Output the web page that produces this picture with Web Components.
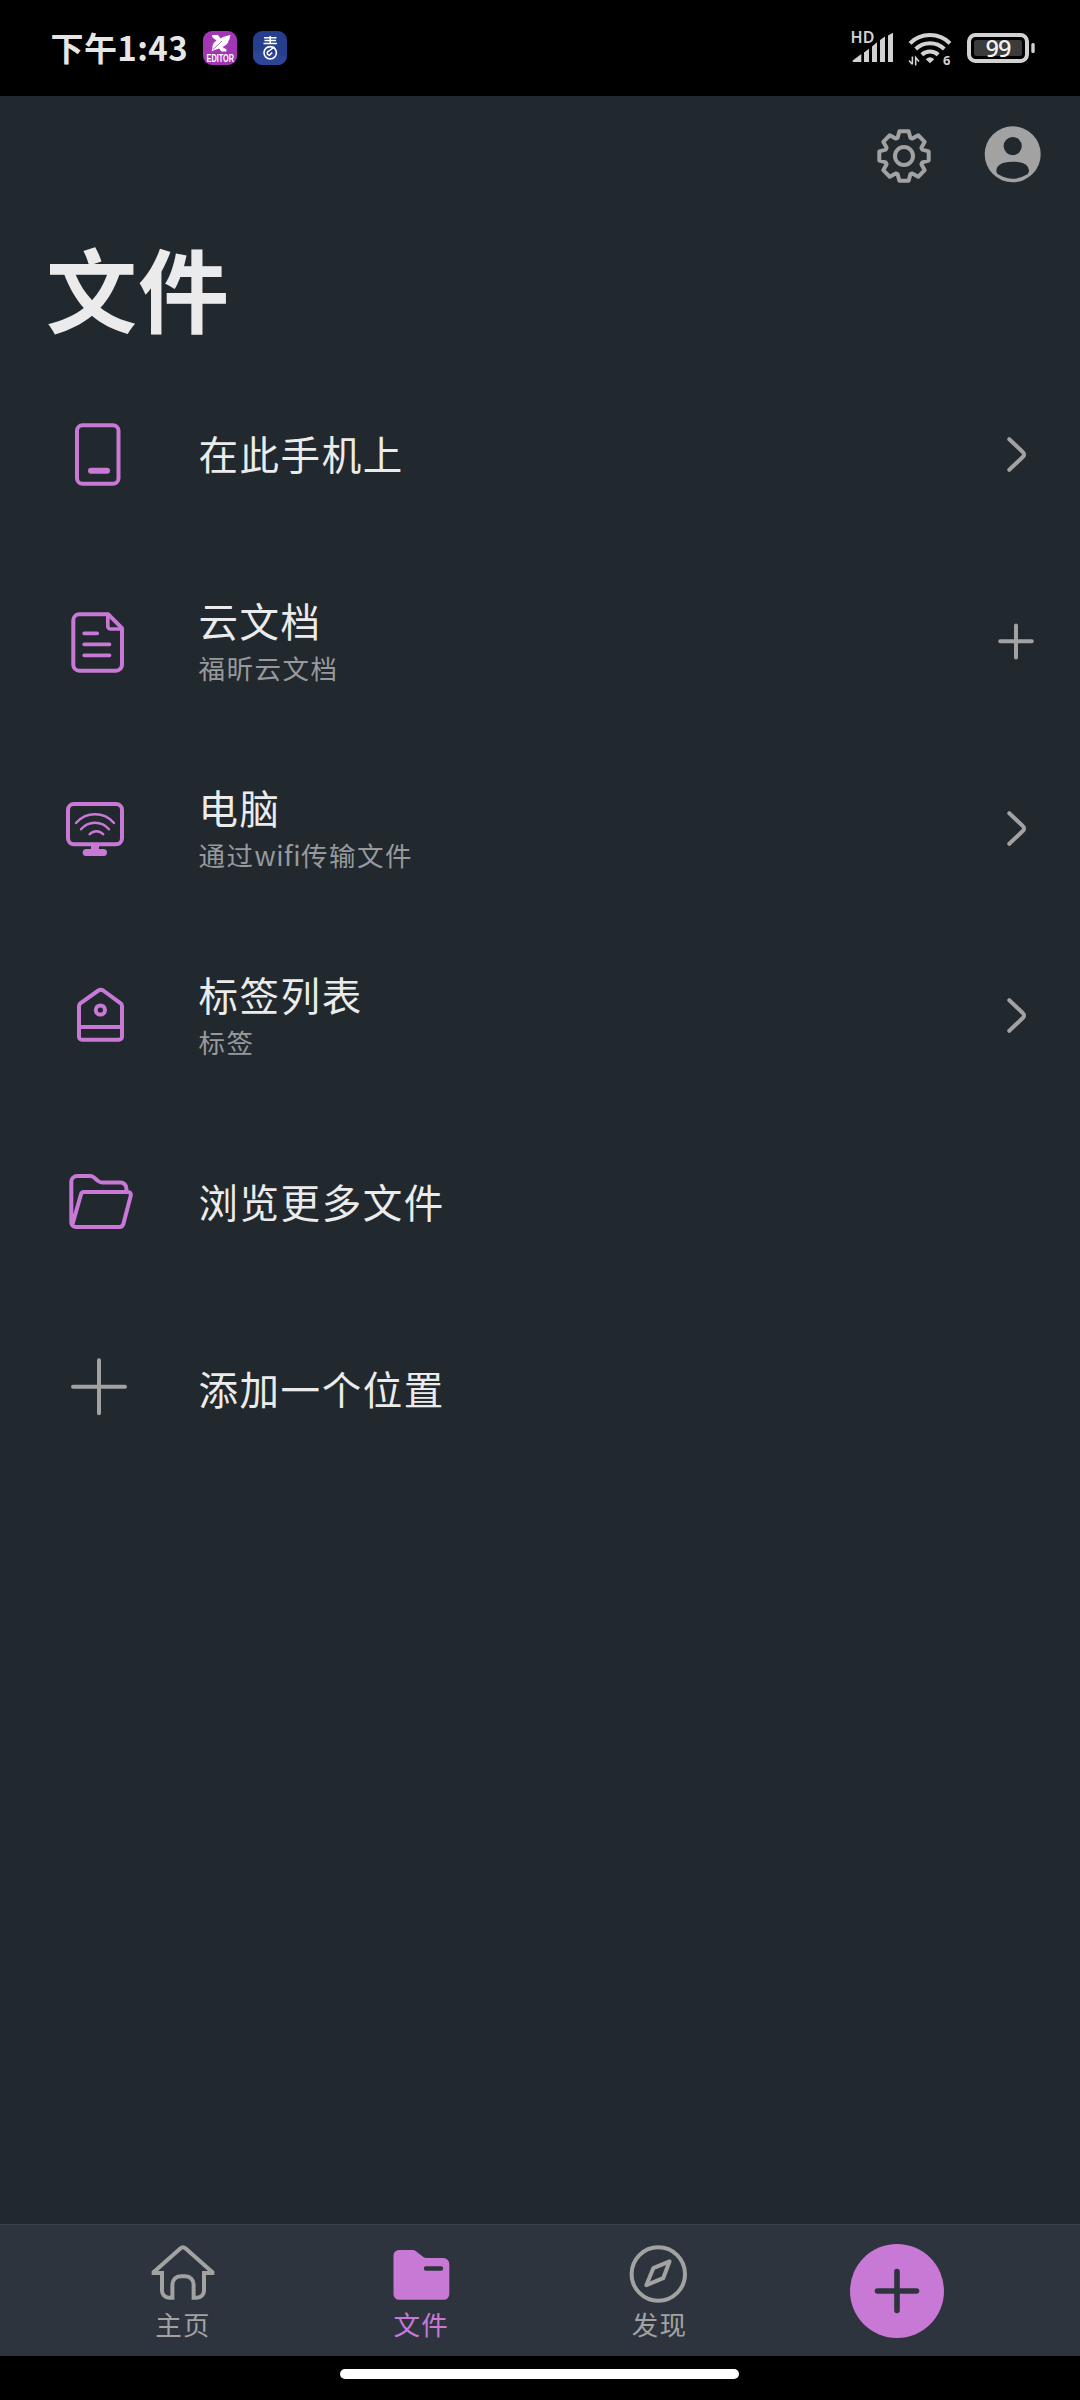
<!DOCTYPE html>
<html lang="zh-CN">
<head>
<meta charset="utf-8">
<title>文件</title>
<style>
html,body{margin:0;padding:0;background:#21282e}
body{width:1080px;height:2400px;overflow:hidden;font-family:"Noto Sans CJK SC","Noto Sans",sans-serif}
</style>
</head>
<body>
<files-screen></files-screen>
<script>
const ICONS = {
  phone: '<rect x="17" y="11.3" width="41.5" height="58.4" rx="5.5"/><path d="M31 56.8H47" stroke-width="6"/>',
  doc: '<path d="M48.3 13.3H19.3a6 6 0 0 0-6 6V63.7a6 6 0 0 0 6 6H56a6 6 0 0 0 6-6V27.2Z"/><path d="M47.8 14V25.2a2.8 2.8 0 0 0 2.8 2.8H61" stroke-width="3.6"/><path d="M24.2 32.3H37.2M24.2 43.3H49.5M24.2 54.3H49.5" stroke-width="3.8"/>',
  monitor: '<rect x="8" y="16" width="54" height="40.3" rx="6"/><path d="M16 35A25 25 0 0 1 54 35M21 41.3A18.3 18.3 0 0 1 49 41.3M29.6 46.3A9 9 0 0 1 43.2 46.3" stroke-width="2.4"/><path d="M35 58V63" stroke-width="8" stroke-linecap="butt"/><path d="M26.2 64.5H43.5" stroke-width="7"/>',
  tag: '<path d="M19 31V61.8a3 3 0 0 0 3 3H59a3 3 0 0 0 3-3V31a4 4 0 0 0-2-3.2L43.2 15.5a4.4 4.4 0 0 0-4.8 0L21 27.8a4 4 0 0 0-2 3.2ZM19 52H62"/><circle cx="40.4" cy="35" r="4.6"/>',
  folder: '<path d="M66.4 29V26.5a6 6 0 0 0-6-6H42a6 6 0 0 1-4-1.6L34 15.4a6 6 0 0 0-4-1.4H17.3a6 6 0 0 0-6 6V60.5a4.5 4.5 0 0 0 4.5 4.5H59.5a4 4 0 0 0 3.8-2.8L70.8 33.5a2.8 2.8 0 0 0-2.7-3.5H24a3 3 0 0 0-3 2.2L12.6 62"/>',
  add: '<path d="M39 11.3V64.2M13 37.7H65"/>',
  chevron: '<path d="M13.3 5.2L27 18.2a3 3 0 0 1 0 4.6L13.3 35.8"/>',
  plus: '<path d="M20 4.6V36.4M4.2 20.3H35.8"/>',
  home: '<path d="M10.6 35V34.2L37.6 10.3a3.6 3.6 0 0 1 4.8 0L69.4 34.2V35H61V52.7a7 7 0 0 1-7 7H50.6V46.3a8 8 0 0 0-8-8H37.4a8 8 0 0 0-8 8V59.7H26a7 7 0 0 1-7-7V35Z" stroke-linejoin="miter" stroke-linecap="butt"/>',
  files: '<path fill="currentColor" stroke="none" fill-rule="evenodd" d="M18 12H31.5a6 6 0 0 1 3.8 1.4L42 18.7a6 6 0 0 0 3.6 1.3H62.3a6 6 0 0 1 6 6V56.3a5.5 5.5 0 0 1-5.5 5.5H18a5.5 5.5 0 0 1-5.5-5.5V17.5a5.5 5.5 0 0 1 5.5-5.5ZM45 28.3a2.2 2.2 0 0 0 0 4.4H60a2.2 2.2 0 0 0 0-4.4Z"/>',
  compass: '<circle cx="39.3" cy="36" r="26.7"/><path d="M50.6 23.3L34.3 30.2L27.3 47.2L44.2 40.2Z"/>'
};
function icon(name, w, h){
  return `<svg width="${w}" height="${h}" viewBox="0 0 ${w} ${h}" fill="none" stroke="currentColor" stroke-width="4" stroke-linecap="round" stroke-linejoin="round">${ICONS[name]}</svg>`;
}
function gearPath(){
  const tooth = [[-6.4,-18.2],[-4.6,-24.7],[4.6,-24.7],[6.4,-18.2]], out = [];
  for (let i = 0; i < 8; i++){
    const a = i*Math.PI/4, c = Math.cos(a), s = Math.sin(a);
    for (const [x,y] of tooth) out.push((x*c-y*s).toFixed(2)+' '+(x*s+y*c).toFixed(2));
  }
  return 'M'+out.join('L')+'Z';
}
class Base extends HTMLElement{
  connectedCallback(){
    if (this.shadowRoot) return;
    this.attachShadow({mode:'open'}).innerHTML = '<style>svg{display:block;flex:none;overflow:visible}'+this.css()+'</style>'+this.html();
  }
}
customElements.define('status-bar', class extends Base{
  css(){return `:host{display:grid;grid-template-columns:152.5px auto 1fr;height:96px;background:#000;color:#e6e6e6;box-sizing:border-box;padding:0 44px 0 50.5px;align-items:start}
  .time{font-size:33px;font-weight:700;letter-spacing:.4px;line-height:50px;padding-top:22px;white-space:nowrap;justify-self:start}
  .apps{display:flex;gap:16px;margin-top:31px}
  .sys{justify-self:end;margin-top:28px}`}
  html(){return `<div class="time">下午1:43</div>
  <div class="apps">
  <svg width="34" height="34" viewBox="0 0 34 34"><rect width="34" height="34" rx="9" fill="#a236b4"/>
   <path fill="#fff" d="M9 4H15L17.5 7.5C20 5.5 23 5 27.5 4L26.5 7L27 7.5L25 10.5L25.5 11L23 14L19.5 16L23.5 18.5V20.5H18.5L16 17.5L10.5 19.5L8.5 20.5L9.5 17.5C9 14 11 11 13.5 9.5L9.5 6.5Z"/><path stroke="#a236b4" stroke-width=".8" d="M10 18.5L19 10"/>
   <text x="3.5" y="31" textLength="27.5" lengthAdjust="spacingAndGlyphs" font-family="Liberation Sans" font-weight="700" font-size="10.8" fill="#fff">EDITOR</text></svg>
  <svg width="34" height="34" viewBox="0 0 34 34"><rect width="34" height="34" rx="9" fill="#263f8c"/><path d="M0 20H14L34 26V25A9 9 0 0 1 25 34H9A9 9 0 0 1 0 25Z" fill="#2c4594"/>
   <g fill="none" stroke="#fff"><path stroke-width="1.5" d="M11 6.7H23.5M11.5 9.5H23M10.5 12.5H24M17.2 5V12.5"/><circle cx="17.2" cy="21.8" r="6.2" stroke-width="1.6"/><path stroke-width="1.5" d="M21.5 15.8L15.8 20A2.2 2.2 0 0 0 16.5 24.3L19.2 21.5"/></g></svg>
  </div>
  <svg class="sys" width="186" height="42" viewBox="850 28 186 42" fill="#d2d2d2" font-family="Noto Sans">
   <text x="850.6" y="42.9" font-size="15.3" font-weight="600" textLength="23.8" lengthAdjust="spacingAndGlyphs">HD</text>
   <path d="M852.7 62V60.5L861.3 54V62ZM864 62V52.5L869 48.7V62ZM872 62V46.5L877 42.3V62ZM880 62V40L885 36.5V62ZM888 62V35.5L893 32.7V62Z"/>
   <g fill="none" stroke="#d2d2d2" stroke-width="4"><path d="M910 43.3A28.5 28.5 0 0 1 950 43.3M915.7 49A20.5 20.5 0 0 1 944.3 49M921.8 54.8A12 12 0 0 1 938.2 54.8"/></g>
   <path d="M930 63.3L925.8 59.3Q930 55.3 934.2 59.3Z"/>
   <path fill="none" stroke="#d2d2d2" stroke-width="1.6" d="M912.4 56.5V64.5M909 60.5L912 64M915.7 65.5V57.5L919 61.5"/>
   <text x="943" y="65" font-size="13" font-weight="700">6</text>
   <rect x="969" y="35" width="58" height="26" rx="6.5" fill="none" stroke="#d2d2d2" stroke-width="4"/>
   <rect x="974" y="40" width="48" height="16" rx="2.5" fill="#3b3b3b"/>
   <rect x="1031.3" y="43" width="3.4" height="10" rx="1.5"/>
   <text x="998.5" y="57" font-size="23.5" font-weight="500" text-anchor="middle" textLength="26" fill="#f2f2f2">99</text>
  </svg>`}
});
customElements.define('page-header', class extends Base{
  css(){return `:host{display:flex;flex-direction:column;height:265px;color:#a2a2a2}
  .actions{display:flex;justify-content:flex-end;gap:49px;padding:30px 37px 0 0}
  h1{margin:50px 0 0 46px;font-size:91px;line-height:100px;font-weight:700;color:#ebebeb;letter-spacing:1px}`}
  html(){return `<div class="actions">
   <svg width="60" height="60" viewBox="-30 -30 60 60" fill="none" stroke="currentColor" stroke-width="4" stroke-linejoin="round"><path d="${gearPath()}"/><circle r="9"/></svg>
   <svg width="60" height="60" viewBox="0 0 60 60" fill="currentColor" fill-rule="evenodd"><path d="M29.7 .3a28 28 0 1 1 0 56a28 28 0 1 1 0-56ZM29.7 11a9.1 9.1 0 1 0 0 18.2a9.1 9.1 0 1 0 0-18.2ZM13.3 45.5C13.3 39.5 18 35.7 29.7 35.7S46 39.5 46 45.5Q45.5 48.2 42.5 49.3A25.5 25.5 0 0 1 17 49.3Q13.8 48.2 13.3 45.5Z"/></svg>
  </div><h1><slot></slot></h1>`}
});
customElements.define('location-row', class extends Base{
  css(){return `:host{display:flex;align-items:center;height:187px;box-sizing:border-box;padding:0 44px 0 60px;color:#c879d6}
  :host([muted]){color:#a2a2a2}
  .text{margin-left:58.5px;flex:1;padding-bottom:4px}
  .text.two{padding-bottom:0;margin-top:1px}
  .title{font-size:39.5px;line-height:50px;letter-spacing:1.55px;color:#ebebeb}
  .sub{font-size:26.5px;line-height:44px;padding-top:1px;letter-spacing:1.5px;color:#979a9c}
  .latin{letter-spacing:.5px}
  .end{color:#a2a2a2}`}
  html(){
    const sub = (this.getAttribute('sub')||'').replace(/[a-z]+/g, '<span class="latin">$&</span>'), end = this.getAttribute('end');
    return icon(this.getAttribute('icon'),80,81)+`<div class="text${sub?' two':''}"><div class="title"><slot></slot></div>${sub?`<div class="sub">${sub}</div>`:''}</div>`+(end?`<div class="end">${icon(end,40,41)}</div>`:'');
  }
});
customElements.define('nav-item', class extends Base{
  css(){return `:host{display:flex;flex-direction:column;align-items:center;flex:1;padding-top:13px;color:#a2a2a2}
  :host([active]){color:#c879d6}
  .label{font-size:26.5px;line-height:27px;letter-spacing:1.4px;padding-left:1px}`}
  html(){return icon(this.getAttribute('icon'),80,72)+'<div class="label"><slot></slot></div>'}
});
customElements.define('create-button', class extends Base{
  css(){return `:host{display:flex;justify-content:center;flex:1;padding-top:19px}`}
  html(){return `<svg width="94" height="94" viewBox="0 0 94 94"><circle cx="47" cy="47" r="47" fill="#c879d6"/><path d="M47 27.5V66.5M27.5 47H66.5" stroke="#2e343e" stroke-width="5.6" stroke-linecap="round"/></svg>`}
});
customElements.define('bottom-nav', class extends Base{
  css(){return `:host{display:flex;height:132px;box-sizing:border-box;padding:0 63.5px;background:#2e343e;border-top:1px solid #39424b}`}
  html(){return '<slot></slot>'}
});
customElements.define('gesture-bar', class extends Base{
  css(){return `:host{display:flex;justify-content:center;height:44px;background:#000}i{width:399px;height:10px;border-radius:5px;background:#fff;margin:13px 1px 0 0}`}
  html(){return '<i></i>'}
});
customElements.define('files-screen', class extends Base{
  css(){return `:host{display:flex;flex-direction:column;width:1080px;height:2400px;background:#21282e}main{flex:1}`}
  html(){return `<status-bar></status-bar>
  <page-header>文件</page-header>
  <main>
   <location-row icon="phone" end="chevron">在此手机上</location-row>
   <location-row icon="doc" end="plus" sub="福昕云文档">云文档</location-row>
   <location-row icon="monitor" end="chevron" sub="通过wifi传输文件">电脑</location-row>
   <location-row icon="tag" end="chevron" sub="标签">标签列表</location-row>
   <location-row icon="folder">浏览更多文件</location-row>
   <location-row icon="add" muted>添加一个位置</location-row>
  </main>
  <bottom-nav>
   <nav-item icon="home">主页</nav-item>
   <nav-item icon="files" active>文件</nav-item>
   <nav-item icon="compass">发现</nav-item>
   <create-button></create-button>
  </bottom-nav>
  <gesture-bar></gesture-bar>`}
});
</script>
</body>
</html>
